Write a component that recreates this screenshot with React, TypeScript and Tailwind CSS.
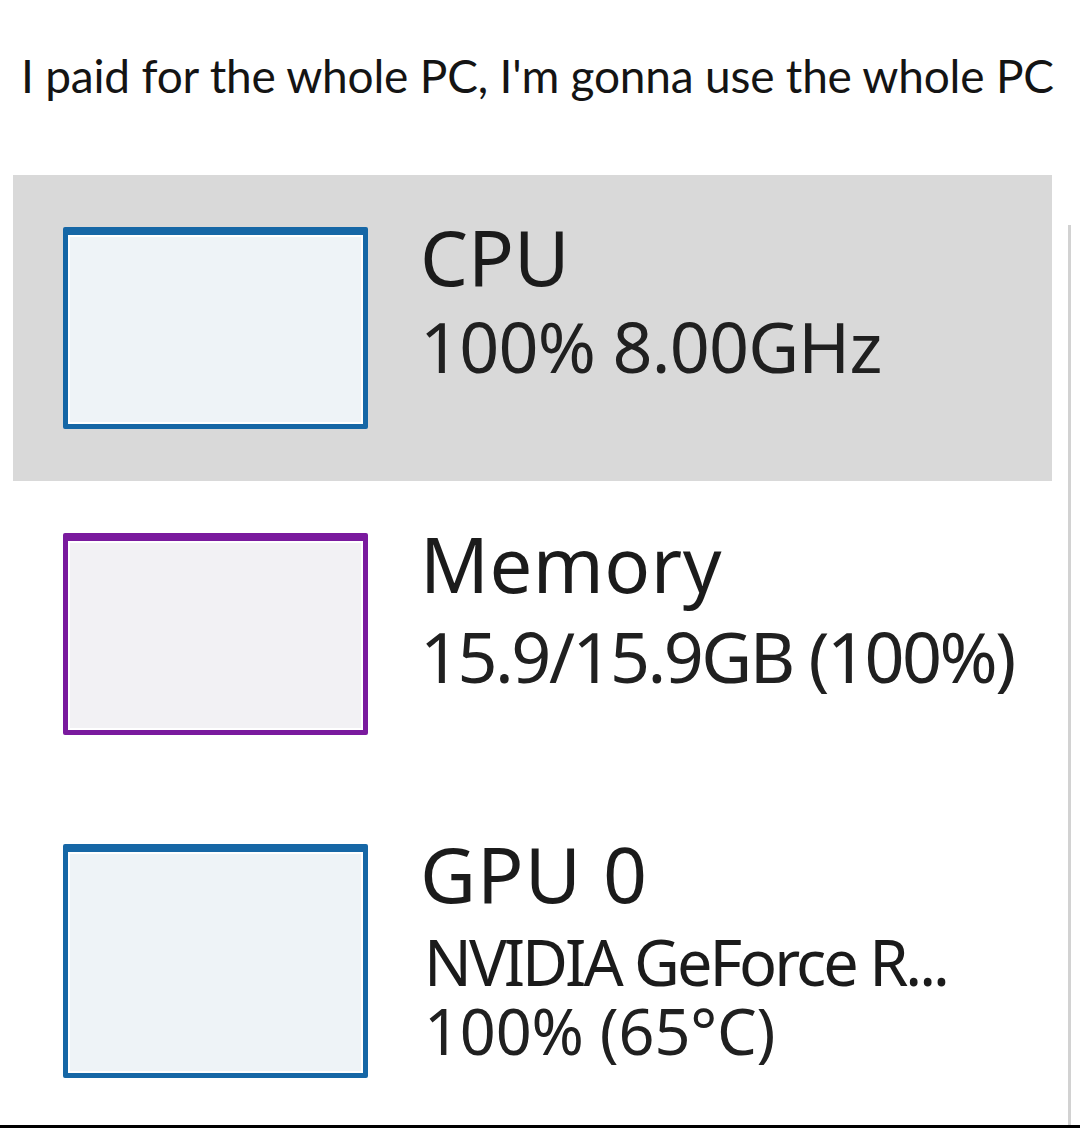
import React from "react";

function Graph({ color, fill, h }: { color: "blue" | "purple"; fill: string; h: string }) {
  const border =
    color === "blue"
      ? "border-[#1667a6]"
      : "border-[#7a1a9e]";
  return (
    <div
      className={`w-[305px] ${h} shrink-0 rounded-[2px] border-x-[5px] border-t-[8px] border-b-[5px] ${border} ${fill} shadow-[inset_0_0_0_2px_#ffffff]`}
    />
  );
}

export default function App() {
  return (
    <div className="w-[1080px] h-[1128px] bg-white flex flex-col overflow-hidden font-['Noto_Sans',sans-serif] text-[#1b1b1b]">
      <h1 className="pl-[21px] pt-[44px] h-[175px] shrink-0 font-['Lato',sans-serif] text-[46px] leading-[64px] tracking-[-0.2px] text-[#141414] font-normal">
        I paid for the whole PC, I'm gonna use the whole PC
      </h1>
      <div className="flex flex-1 border-b-[3px] border-black">
        <div className="ml-[13px] w-[1039px] flex flex-col">
          {/* CPU */}
          <div className="h-[306px] bg-[#d9d9d9] flex pl-[50px] pt-[52px]">
            <Graph color="blue" fill="bg-[#eef3f7]" h="h-[202px]" />
            <div className="ml-[52px] -mt-[8px] flex flex-col">
              <div className="text-[76px] leading-[75px] tracking-[0px]">CPU</div>
              <div className="mt-[17px] text-[70px] leading-[70px] tracking-[-0.8px] text-[#202020]">
                100% 8.00GHz
              </div>
            </div>
          </div>
          {/* Memory */}
          <div className="h-[306px] flex pl-[50px] pt-[52px]">
            <Graph color="purple" fill="bg-[#f2f1f4]" h="h-[202px]" />
            <div className="ml-[52px] -mt-[7px] flex flex-col">
              <div className="text-[76px] leading-[75px] tracking-[0.5px]">Memory</div>
              <div className="mt-[20px] text-[70px] leading-[70px] tracking-[-2.5px] text-[#202020]">
                15.9/15.9GB (100%)
              </div>
            </div>
          </div>
          {/* GPU */}
          <div className="flex-1 flex pl-[50px] pt-[57px]">
            <Graph color="blue" fill="bg-[#eef3f7]" h="h-[234px]" />
            <div className="ml-[52px] -mt-[8px] flex flex-col">
              <div className="text-[77px] leading-[75px] tracking-[1px]">GPU 0</div>
              <div className="mt-[18px] pl-[4px] text-[63px] leading-[66px] tracking-[-3px]">
                NVIDIA GeForce R...
              </div>
              <div className="mt-[3px] pl-[4px] text-[63px] leading-[66px] tracking-[-0.2px] text-[#202020]">
                100% (65°C)
              </div>
            </div>
          </div>
        </div>
        <div className="ml-[16px] mt-[50px] w-[3px] bg-[#d2d2d2]" />
      </div>
    </div>
  );
}
